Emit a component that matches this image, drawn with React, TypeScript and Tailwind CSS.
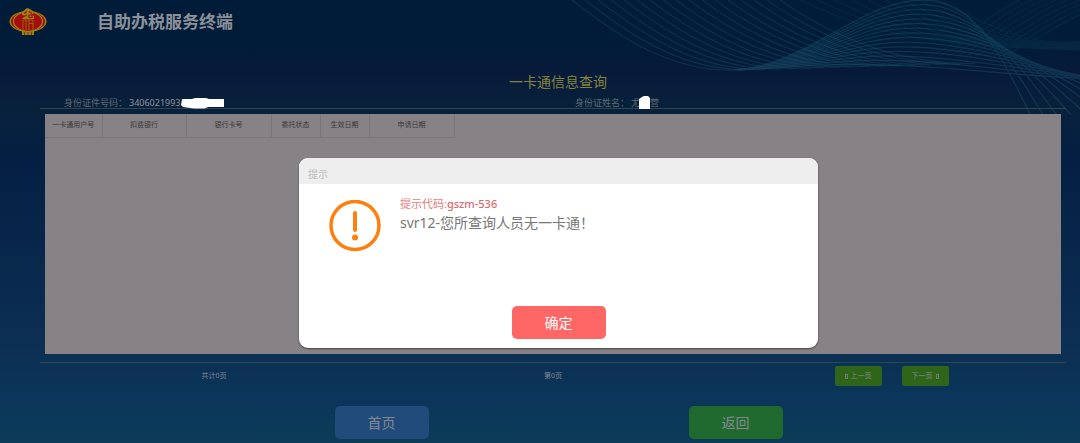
import React, { useState } from 'react';

const columns = [
  { label: '一卡通用户号', width: 'w-[57px]' },
  { label: '扣费银行', width: 'w-[84px]' },
  { label: '银行卡号', width: 'w-[85px]' },
  { label: '委托状态', width: 'w-[49px]' },
  { label: '生效日期', width: 'w-[49px]' },
  { label: '申请日期', width: 'w-[85px]' },
];

const range = (n: number) => Array.from({ length: n }, (_, i) => i);

// Decorative line waves in the top right corner
const Waves: React.FC = () => (
  <svg
    className="absolute top-0 right-0 w-[540px] h-[130px] pointer-events-none"
    viewBox="540 0 540 130"
    fill="none"
    stroke="#1c5670"
    strokeWidth="1.300"
    aria-hidden="true"
  >
    <g opacity="0.35">
      {range(17).map((i) => (
        <path
          key={i}
          d={`M${572 + i * 13} 0C${625 + i * 13} ${42 - i * 0.3} ${675 + i * 14} ${72 - i * 0.5} ${735 + i * 15} ${70 - i * 0.4}`}
        />
      ))}
    </g>
    <g opacity="0.42">
      {range(15).map((i) => {
        const y = i * 4.7;
        return (
          <path
            key={i}
            d={`M735 70C${805 + i} ${66 - i * 0.1} ${862 - i} ${y * 0.95} ${922 - i} ${y}C${970 + i} ${y + i * 0.2} ${994 + i * 6} ${38 + i * 3.4} ${1035 + i * 12} ${125 - i * 3.4}`}
          />
        );
      })}
    </g>
    <g opacity="0.2">
      {range(9).map((i) => (
        <path key={i} d={`M${800 + i * 17} 0C${870 + i * 15} ${34 - i} ${930 + i * 12} 46 1080 ${50 - i}`} />
      ))}
      {range(9).map((i) => (
        <path key={i} d={`M${930 + i * 9} 56C${965 + i * 9} 42 ${985 + i * 10} 16 ${1020 + i * 12} 0`} />
      ))}
    </g>
  </svg>
);

const TaxLogo: React.FC = () => (
  <svg className="w-[38px] h-7 shrink-0" viewBox="0 0 38 28" fill="none" aria-hidden="true">
    <ellipse cx="19" cy="13.5" rx="18.5" ry="10.5" fill="#9a8010" />
    <ellipse cx="19" cy="13.5" rx="17" ry="9.5" fill="#a30d0d" />
    <ellipse cx="19" cy="13.5" rx="14.5" ry="9.5" stroke="#a08010" strokeWidth="1.200" />
    <ellipse cx="19" cy="13.5" rx="12.5" ry="9.5" fill="#a30d0d" />
    <path d="M13 23h12v4H13z" fill="#9a8010" />
    <path d="M15.500 24v3M19 24v3M22.500 24v3" stroke="#5a200a" strokeWidth="0.700" />
    <path d="M18 0l-5 4v3l3 1-3 3h12V8l-2-1 2-3-4-3z" fill="#9a8010" />
    <path d="M15 5.500l3-2M20 3.500l3 2M15 8.500l3-1.500M20 7h3v2.500h-3z" stroke="#a30d0d" strokeWidth="1.200" />
    <path d="M14 12v10M17 12v11M20 12v11M24 12v10M14 12h10M20 15.500h4" stroke="#96600f" />
  </svg>
);

const PagerGlyph: React.FC = () => <span className="inline-block w-[3px] h-[5px] border border-current opacity-70" />;

const AlertDialog: React.FC<{ onClose: () => void }> = ({ onClose }) => (
  <div className="absolute inset-0 flex items-start justify-center pl-[37px] pt-[158px] z-20">
    <div
      role="alertdialog"
      aria-labelledby="alert-title"
      className="w-[519px] rounded-[9px] bg-white overflow-hidden shadow-[0_1px_2px_rgba(0,0,0,0.5)]"
    >
      <h2 id="alert-title" className="h-[26px] bg-[#eee] pl-[9px] pt-2 text-[10px] leading-4 text-[#bbb]">提示</h2>
      <div className="flex gap-[19px] h-[122px] pl-[30px] pt-3">
        <svg className="size-[52px] shrink-0 mt-1" viewBox="0 0 52 52" fill="none" stroke="#ff7f0e" aria-hidden="true">
          <circle cx="26" cy="25.5" r="24" strokeWidth="3.500" />
          <path d="M26 13v17" strokeWidth="4" strokeLinecap="round" />
          <circle cx="26" cy="37.5" r="3" fill="#ff7f0e" stroke="none" />
        </svg>
        <div>
          <p className="text-[11px] leading-4 text-[#e87c80]">
            提示代码:<span className="font-medium text-[#e0696e]">gszm-536</span>
          </p>
          <p className="text-sm leading-[22px] text-[#777]">svr12-您所查询人员无一卡通！</p>
        </div>
      </div>
      <div className="flex justify-center pb-[9px]">
        <button onClick={onClose} className="w-[94px] h-[33px] rounded-[5px] bg-[#ff6666] text-sm text-white">
          确定
        </button>
      </div>
    </div>
  </div>
);

const App: React.FC = () => {
  const [showAlert, setShowAlert] = useState(true);

  return (
    <div className="relative min-h-screen overflow-hidden font-['Noto_Sans','Noto_Sans_CJK_SC',sans-serif] text-[#858a90] bg-[linear-gradient(180deg,#001c38_0%,#001c38_9%,#071a3a_16%,#08213b_24%,#051f44_36%,#0b2f53_78%,#0b355a_90%,#0c3d58_100%)]">
      <Waves />

      <header className="flex items-center h-11 pl-[9px] gap-[50px]">
        <TaxLogo />
        <h1 className="text-[17px] font-bold text-[#8c9199]">自助办税服务终端</h1>
      </header>

      <main className="relative pl-10 pr-[14px] pt-[27px]">
        <h2 className="text-center text-sm leading-[22px] text-[#858540] pl-[10px]">一卡通信息查询</h2>

        <div className="grid grid-cols-2 h-4 border-b border-[#33444c] pt-1 text-[9px] leading-3 text-[#5d6a72]">
          <p className="flex h-3 items-center pl-6">
            身份证件号码：
            <span className="pl-[2px] text-[#8e949a]">3406021993</span>
            <svg className="w-[43px] h-3" viewBox="0 0 43 12" aria-hidden="true">
              <path d="M1 2L11 2 14 1H25L28 2H43V10L27 10 24 11.500H13L2 10 0 8z" fill="#fff" />
            </svg>
          </p>
          <p className="flex h-3 items-center pl-[22px]">
            身份证姓名：
            <span className="pl-[2px]">尤</span>
            <svg className="-ml-px w-[11px] h-[14px]" viewBox="0 0 11 14" aria-hidden="true">
              <path d="M3 1L5 0H9L11 2V13H0V3z" fill="#fff" />
            </svg>
            营
          </p>
        </div>

        <div className="mt-[5px] mx-[5px] h-[240px] bg-[#868286]">
          <table className="table-fixed border-collapse text-[7px] leading-[22px] text-[#3a383a]">
            <thead>
              <tr>
                {columns.map((col) => (
                  <th key={col.label} className={`${col.width} h-[23px] p-0 font-normal border-r border-b border-[#797579]`}>
                    {col.label}
                  </th>
                ))}
              </tr>
            </thead>
          </table>
        </div>

        <div className="mt-2 grid grid-cols-3 items-center border-t border-[#33444c] pt-[3px] text-[7px]">
          <span className="text-center pl-[6px]">共计0页</span>
          <span className="text-center">第0页</span>
          <div className="flex justify-center gap-5 pr-[7px]">
            <button className="flex items-center justify-center gap-[3px] w-[47px] h-5 rounded-xs bg-[#2f6518]">
              <PagerGlyph />
              上一页
            </button>
            <button className="flex items-center justify-center gap-[3px] w-[47px] h-5 rounded-xs bg-[#2f6518]">
              下一页
              <PagerGlyph />
            </button>
          </div>
        </div>
      </main>

      <footer className="flex justify-center gap-[260px] pl-[37px] pt-5 pb-1 text-sm">
        <button className="w-[94px] h-[33px] rounded-[5px] bg-[#204b7b]">首页</button>
        <button className="w-[94px] h-[33px] rounded-[5px] bg-[#20692f]">返回</button>
      </footer>

      {showAlert && <AlertDialog onClose={() => setShowAlert(false)} />}
    </div>
  );
};

export default App;
